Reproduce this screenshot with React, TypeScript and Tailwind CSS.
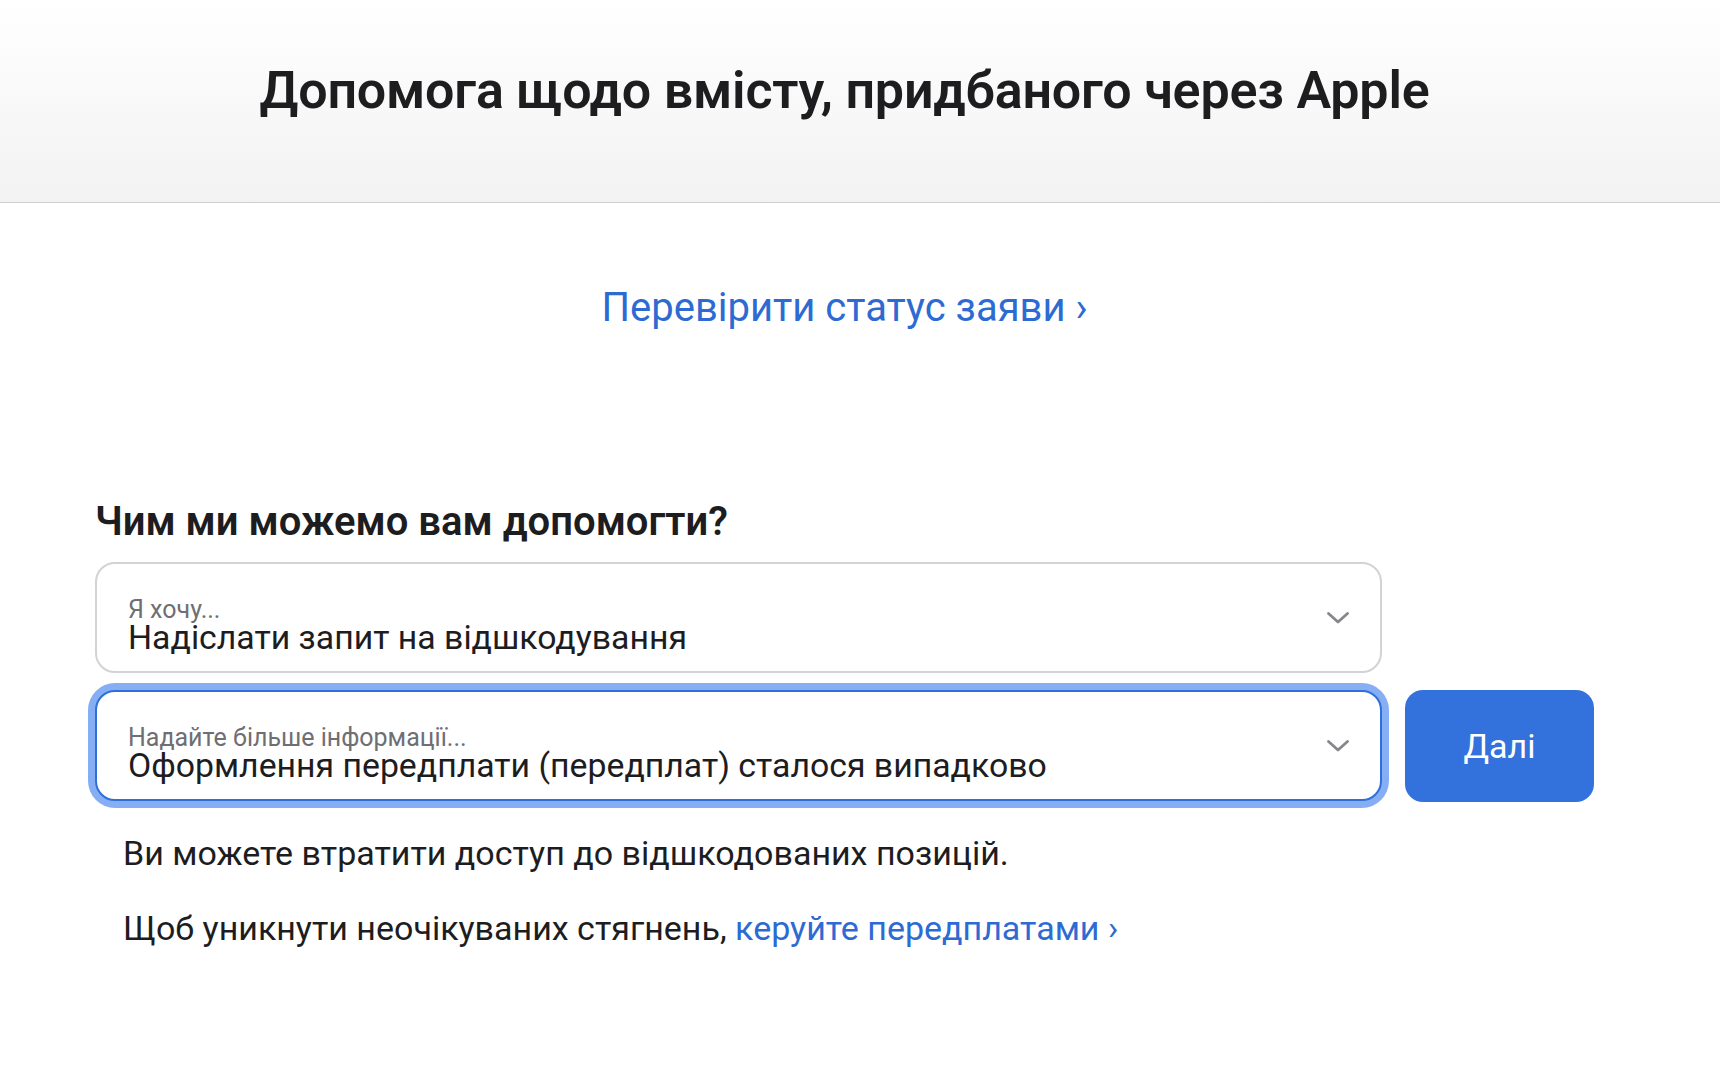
import React, { FC } from "react";

const Chevron: FC = () => (
  <svg width="22" height="12" viewBox="0 0 22 12" fill="none" className="shrink-0">
    <path
      d="M1.5 1.5 L11 10 L20.5 1.5"
      stroke="#86868b"
      strokeWidth="2.8"
      strokeLinecap="round"
      strokeLinejoin="round"
    />
  </svg>
);

interface SelectProps {
  label: string;
  value: string;
  focused?: boolean;
}

const SelectBox: FC<SelectProps> = ({ label, value, focused }) => (
  <div
    className={
      focused
        ? "w-[1287px] h-[111px] rounded-[20px] border-2 border-[#2f6fd9] ring-[7px] ring-[#86aef5] bg-white flex items-start justify-between pl-[31px] pr-[31px]"
        : "w-[1287px] h-[111px] rounded-[20px] border-2 border-[#d2d2d7] bg-white flex items-start justify-between pl-[31px] pr-[31px]"
    }
  >
    <div className="flex flex-col pt-[35px]">
      <span className="text-[25px] leading-[22px] text-[#6e6e73]">{label}</span>
      <span className="text-[33.8px] leading-[33px] text-[#1d1d1f]">{value}</span>
    </div>
    <div className="self-center">
      <Chevron />
    </div>
  </div>
);

const App: FC = () => {
  return (
    <div className="min-h-[1074px] bg-white font-['Roboto',sans-serif] text-[#1d1d1f]">
      {/* шапка */}
      <header className="h-[203px] bg-gradient-to-b from-white to-[#f2f2f2] border-b border-[#d0d0d0]">
        <div className="pl-[95px] w-[1594px] pt-[62px]">
          <h1 className="text-center text-[52px] leading-[58px] font-semibold tracking-[-0.2px]">
            Допомога щодо вмісту, придбаного через Apple
          </h1>
        </div>
      </header>

      <main className="pl-[95px] w-[1594px]">
        <div className="text-center mt-[83px]">
          <a href="#" className="text-[40px] leading-[44px] text-[#2d6bd3]">
            Перевірити статус заяви ›
          </a>
        </div>

        <h2 className="mt-[168px] text-[40px] leading-[48px] font-semibold">
          Чим ми можемо вам допомогти?
        </h2>

        <div className="mt-[16px]">
          <SelectBox label="Я хочу..." value="Надіслати запит на відшкодування" />
        </div>

        <div className="mt-[17px] flex items-start gap-[23px]">
          <SelectBox
            label="Надайте більше інформації..."
            value="Оформлення передплати (передплат) сталося випадково"
            focused
          />
          <button className="w-[189px] h-[112px] rounded-[18px] bg-[#3371dd] text-white text-[34px]">
            Далі
          </button>
        </div>

        <div className="pl-[28px] mt-[33px] text-[34px] leading-[36px]">
          <p>Ви можете втратити доступ до відшкодованих позицій.</p>
          <p className="mt-[39px]">
            Щоб уникнути неочікуваних стягнень,{" "}
            <a href="#" className="text-[#2d6bd3]">
              керуйте передплатами ›
            </a>
          </p>
        </div>
      </main>
    </div>
  );
};

export default App;
